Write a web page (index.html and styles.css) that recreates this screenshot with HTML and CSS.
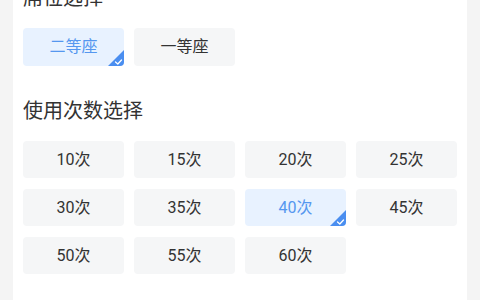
FILE: index.html
```
<!DOCTYPE html>
<html lang="zh-CN">
<head>
    <meta charset="UTF-8">
    <meta name="viewport" content="width=device-width, initial-scale=1.0">
    <title>席位选择</title>
    <link rel="stylesheet" href="styles.css">
</head>
<body>
    <div class="card">
        <div class="section-title">席位选择</div>
        <div class="options seat">
            <div class="option active">二等座
                <svg class="tick" width="16" height="16" viewBox="0 0 16 16"><polygon points="16,0 16,16 0,16" fill="#4a8ef0"/><path d="M7.5 12 L9.8 14 L13.5 10" stroke="#fff" stroke-width="1.3" fill="none" stroke-linecap="round" stroke-linejoin="round"/></svg>
            </div>
            <div class="option">一等座</div>
        </div>
        <div class="section-title second">使用次数选择</div>
        <div class="options">
            <div class="option">10次</div>
            <div class="option">15次</div>
            <div class="option">20次</div>
            <div class="option">25次</div>
            <div class="option">30次</div>
            <div class="option">35次</div>
            <div class="option active">40次
                <svg class="tick" width="16" height="16" viewBox="0 0 16 16"><polygon points="16,0 16,16 0,16" fill="#4a8ef0"/><path d="M7.5 12 L9.8 14 L13.5 10" stroke="#fff" stroke-width="1.3" fill="none" stroke-linecap="round" stroke-linejoin="round"/></svg>
            </div>
            <div class="option">45次</div>
            <div class="option">50次</div>
            <div class="option">55次</div>
            <div class="option">60次</div>
        </div>
    </div>
</body>
</html>
```
FILE: styles.css
```
html, body {
    margin: 0;
    padding: 0;
    height: 100%;
    overflow: hidden;
}
body {
    font-family: Roboto, "Noto Sans CJK SC", sans-serif;
    background-color: #f4f4f4;
    color: #333;
}
.card {
    background-color: #fff;
    margin: -12px 13px 0 13px;
    padding: 0 10px;
    height: calc(100% + 12px);
    box-sizing: border-box;
}
.section-title {
    font-size: 20px;
    line-height: 20px;
    color: #333;
    margin-bottom: 20px;
}
.section-title.second {
    margin-top: 35px;
}
.options {
    display: grid;
    grid-template-columns: repeat(4, 101px);
    column-gap: 10px;
    row-gap: 11px;
}
.option {
    position: relative;
    height: 37px;
    line-height: 37px;
    text-align: center;
    font-size: 16px;
    background-color: #f5f6f7;
    border-radius: 4px;
    overflow: hidden;
    color: #333;
}
.seat .option {
    height: 38px;
    line-height: 38px;
}
.option.active {
    background-color: #e8f2ff;
    color: #5597ef;
}
.tick {
    position: absolute;
    right: 0;
    bottom: 0;
    display: block;
}
```
